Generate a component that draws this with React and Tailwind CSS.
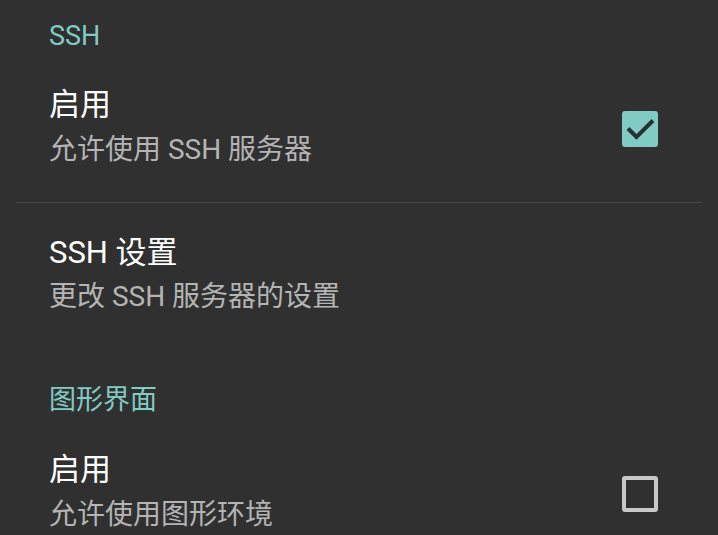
export default function App() {
  const font = { fontFamily: '"Roboto", "Noto Sans CJK SC", sans-serif' };
  const Title = ({ children }) => (
    <div className="text-[31px] leading-[40px] text-white">{children}</div>
  );
  const Summary = ({ children }) => (
    <div className="text-[28px] leading-[40px] text-[#b4b4b4]">{children}</div>
  );
  const Checked = () => (
    <div className="w-[36px] h-[36px] rounded-[3px] bg-[#80cbc4]">
      <svg width="36" height="36" viewBox="0 0 36 36">
        <path d="M6 17.5l8.5 8.5L31 9.5" fill="none" stroke="#263232" strokeWidth="4" />
      </svg>
    </div>
  );
  const Unchecked = () => (
    <div className="w-[36px] h-[36px] rounded-[3px] border-[4px] border-[#c8c8c8]" />
  );
  return (
    <div className="w-[718px] h-[535px] bg-[#303030] overflow-hidden" style={font}>
      <div className="h-[72px] flex items-center px-[49px] text-[27px] text-[#80cbc4]">SSH</div>
      <div className="h-[130px] pt-[13px] pl-[49px] pr-[60px] flex items-start justify-between">
        <div>
          <Title>启用</Title>
          <div className="mt-[5px]"><Summary>允许使用 SSH 服务器</Summary></div>
        </div>
        <div className="mt-[26px]"><Checked /></div>
      </div>
      <div className="mx-[16px] h-px bg-[#4a4a4a]" />
      <div className="h-[157px] pt-[30px] pl-[49px]">
        <Title>SSH 设置</Title>
        <div className="mt-[4px]"><Summary>更改 SSH 服务器的设置</Summary></div>
      </div>
      <div className="h-[80px] flex items-center px-[49px] text-[27px] text-[#80cbc4]">图形界面</div>
      <div className="pt-[10px] pl-[49px] pr-[60px] flex items-start justify-between">
        <div>
          <Title>启用</Title>
          <div className="mt-[5px]"><Summary>允许使用图形环境</Summary></div>
        </div>
        <div className="mt-[26px]"><Unchecked /></div>
      </div>
    </div>
  );
}
